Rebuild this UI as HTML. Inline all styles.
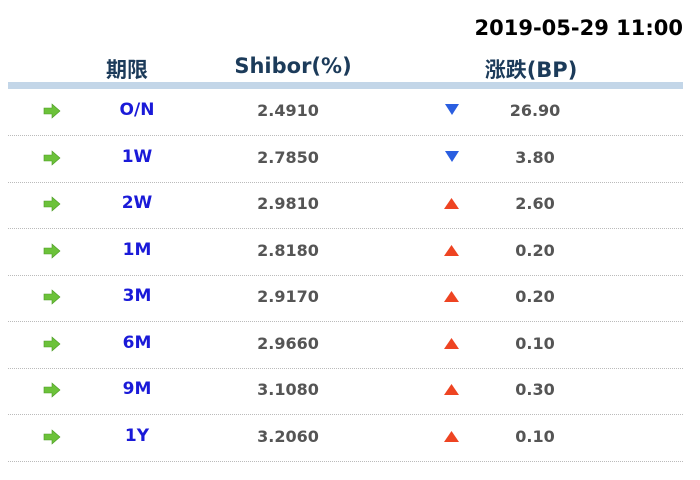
<html><head><style>
body{margin:0;width:700px;height:480px;background:#fff;font-family:"DejaVu Sans","Noto Sans CJK SC",sans-serif;font-weight:bold;position:relative;overflow:hidden}
.a{position:absolute;white-space:nowrap}
.date{right:17px;top:16px;font-size:21px;color:#000}
.h{top:54px;font-size:21px;color:#1c3b5a;transform:translateX(-50%)}
.bar{left:8px;top:82px;width:675px;height:7px;background:#c3d6e8}
.sep{left:8px;width:675px;border-top:1px dotted #bbb;height:0}
.t{font-size:17px;color:#1a1ad8;transform:translateX(-50%)}
.v{font-size:16px;color:#555;transform:translateX(-50%)}
</style></head><body>
<div class="a date">2019-05-29 11:00</div>
<div class="a h" style="left:127px">期限</div>
<div class="a h" style="left:293px">Shibor(%)</div>
<div class="a h" style="left:531px">涨跌(BP)</div>
<div class="a bar"></div>
<div id="r"></div>
<script>
var d=[["O/N","2.4910",0,"26.90"],["1W","2.7850",0,"3.80"],["2W","2.9810",1,"2.60"],["1M","2.8180",1,"0.20"],["3M","2.9170",1,"0.20"],["6M","2.9660",1,"0.10"],["9M","3.1080",1,"0.30"],["1Y","3.2060",1,"0.10"]];
var h="";
d.forEach(function(r,i){var c=111+i*46.5;var y=c-10;
h+='<svg class="a" style="left:43px;top:'+(c-8)+'px" width="18" height="16"><path d="M1 5h8V1l8 7-8 7v-4H1z" fill="#6cc23a" stroke="#4a9a22" stroke-width="0.6"/></svg>';
h+='<div class="a t" style="left:137px;top:'+(y-1)+'px">'+r[0]+'</div>';
h+='<div class="a v" style="left:288px;top:'+y+'px">'+r[1]+'</div>';
h+=r[2]?'<svg class="a" style="left:443px;top:'+(c-7)+'px" width="17" height="13"><path d="M8.5 1L16 12H1z" fill="#ee4422"/></svg>':'<svg class="a" style="left:444px;top:'+(c-8)+'px" width="16" height="13"><path d="M1 1h14L8 12z" fill="#2a5ee0"/></svg>';
h+='<div class="a v" style="left:535px;top:'+y+'px">'+r[3]+'</div>';
h+='<div class="a sep" style="top:'+Math.round(c+24)+'px"></div>';});
document.getElementById("r").innerHTML=h;
</script>
</body></html>
